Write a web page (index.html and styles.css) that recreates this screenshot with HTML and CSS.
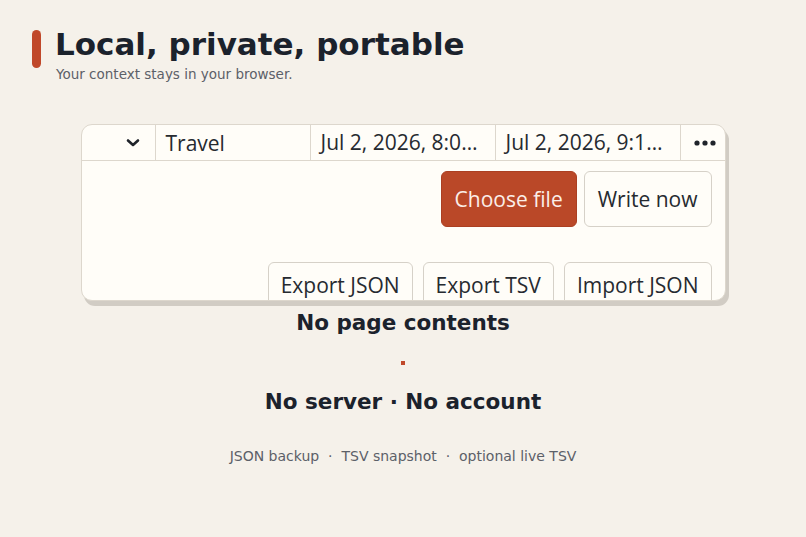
FILE: index.html
```html
<!DOCTYPE html>
<html lang="en">
<head>
    <meta charset="UTF-8">
    <meta name="viewport" content="width=device-width, initial-scale=1.0">
    <title>Local, private, portable</title>
    <link rel="stylesheet" href="styles.css">
</head>
<body>
    <header class="intro">
      <div class="introBar"></div>
      <div>
        <h1 class="introTitle">Local, private, portable</h1>
        <p class="introSub">Your context stays in your browser.</p>
      </div>
    </header>

    <section class="panel">
      <div class="panelRow">
        <div class="cell cellToggle">
          <svg width="14" height="10" viewBox="0 0 14 10"><path d="M2 2.5 L7 7 L12 2.5" fill="none" stroke="#1f232a" stroke-width="2.6" stroke-linecap="round" stroke-linejoin="round"/></svg>
        </div>
        <div class="cell cellName">Travel</div>
        <div class="cell cellDate">Jul 2, 2026, 8:00 AM</div>
        <div class="cell cellDate">Jul 2, 2026, 9:15 AM</div>
        <div class="cell cellMore">
          <!-- row menu -->
          <svg width="22" height="6" viewBox="0 0 22 6"><circle cx="3" cy="3" r="2.6" fill="#1f232a"/><circle cx="11" cy="3" r="2.6" fill="#1f232a"/><circle cx="19" cy="3" r="2.6" fill="#1f232a"/></svg>
        </div>
      </div>
      <div class="panelBody">
        <div class="actions">
          <button class="btn btnPrimary">Choose file</button>
          <button class="btn">Write now</button>
        </div>
        <div class="actions actionsLow">
          <button class="btn btnLow">Export JSON</button>
          <button class="btn btnLow">Export TSV</button>
          <button class="btn btnLow">Import JSON</button>
        </div>
      </div>
    </section>

    <main class="notes">
      <h2 class="noteTitle">No page contents</h2>
      <div class="noteDot"></div>
      <h2 class="noteTitle">No server &middot; No account</h2>
      <p class="noteFormats">JSON backup &nbsp;&middot;&nbsp; TSV snapshot &nbsp;&middot;&nbsp; optional live TSV</p>
    </main>
</body>
</html>
```

FILE: styles.css
```css
body {
  margin: 0;
  background: #f5f1ea;
  font-family: "DejaVu Sans", sans-serif;
  color: #1b222c;
}
.intro {
  display: flex;
  gap: 14px;
  padding: 30px 0 0 32px;
}
.introBar {
  width: 9px;
  height: 38px;
  border-radius: 5px;
  background: #c0482a;
}
.introTitle {
  margin: -4px 0 0;
  font-size: 31px;
  line-height: 36px;
  font-weight: bold;
}
.introSub {
  margin: 4px 0 0 1px;
  font-size: 13.5px;
  color: #5c6068;
}
.panel {
  width: 643px;
  height: 175px;
  margin: 42px auto 0;
  background: #fffdf8;
  border: 1px solid #ddd7cd;
  border-radius: 11px;
  box-shadow: 3px 5px 0 #d1ccc4;
  overflow: hidden;
  font-family: "Open Sans", sans-serif;
  color: #262a30;
}
.panelRow {
  display: flex;
  height: 35px;
  border-bottom: 1px solid #ddd7cd;
}
.cell {
  display: flex;
  align-items: center;
  padding: 0 10px;
  font-size: 21px;
  border-right: 1px solid #ddd7cd;
  white-space: nowrap;
  overflow: hidden;
  box-sizing: border-box;
}
.cellToggle {
  width: 74px;
  justify-content: flex-end;
  padding-right: 15px;
}
.cellName {
  width: 155px;
}
.cellDate {
  display: block;
  width: 185px;
  padding-right: 16px;
  line-height: 35px;
  text-overflow: ellipsis;
}
.cellMore {
  flex: 1;
  border-right: none;
  justify-content: center;
  padding: 0 0 0 4px;
}
.panelBody {
  padding: 10px 13px 0;
}
.actions {
  display: flex;
  justify-content: flex-end;
  gap: 7px;
}
.actionsLow {
  margin-top: 35px;
  gap: 10px;
}
.btn {
  height: 56px;
  padding: 0 13px;
  font-family: "Open Sans", sans-serif;
  font-size: 21px;
  color: #262a30;
  background: #fffdf8;
  border: 1px solid #d6d1c8;
  border-radius: 6px;
}
.btnPrimary {
  background: #ba4828;
  border-color: #ab3f22;
  color: #fbeee8;
}
.btnLow {
  height: 45px;
  padding: 0 12px;
}
.notes {
  text-align: center;
  padding-top: 8px;
}
.noteTitle {
  margin: 0;
  font-size: 21.5px;
  line-height: 28px;
  font-weight: bold;
}
.noteDot {
  width: 4px;
  height: 4px;
  margin: 24px auto 23px;
  background: #c0482a;
}
.noteFormats {
  margin: 32px 0 0;
  font-size: 14px;
  color: #5c6068;
}
```
